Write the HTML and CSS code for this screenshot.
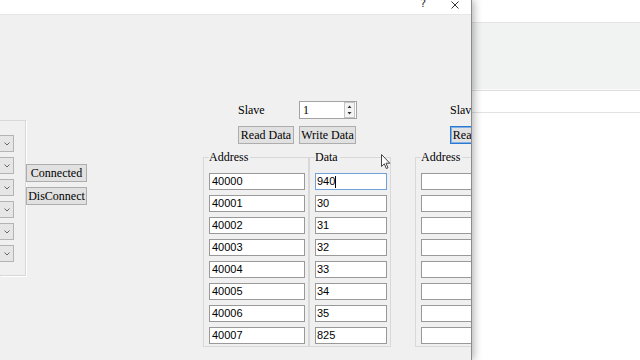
FILE: index.html
```html
<!DOCTYPE html>
<html>
<head>
<meta charset="utf-8">
<link rel="stylesheet" href="styles.css">
</head>
<body>
<div class="screen">
  <div class="dialog">
    <div class="titlebar">
      <span class="help">?</span>
      <svg class="close" width="8" height="8" viewBox="0 0 8 8"><path d="M0.5 0.5 L7.5 7.5 M7.5 0.5 L0.5 7.5" stroke="#333" stroke-width="1" fill="none"/></svg>
    </div>
    <div class="client">
      <div class="port-group">
        <div class="combo"><svg width="6" height="4" viewBox="0 0 6 4"><path d="M0.5 0.5 L3 3 L5.5 0.5" stroke="#666" fill="none"/></svg></div>
        <div class="combo"><svg width="6" height="4" viewBox="0 0 6 4"><path d="M0.5 0.5 L3 3 L5.5 0.5" stroke="#666" fill="none"/></svg></div>
        <div class="combo"><svg width="6" height="4" viewBox="0 0 6 4"><path d="M0.5 0.5 L3 3 L5.5 0.5" stroke="#666" fill="none"/></svg></div>
        <div class="combo"><svg width="6" height="4" viewBox="0 0 6 4"><path d="M0.5 0.5 L3 3 L5.5 0.5" stroke="#666" fill="none"/></svg></div>
        <div class="combo"><svg width="6" height="4" viewBox="0 0 6 4"><path d="M0.5 0.5 L3 3 L5.5 0.5" stroke="#666" fill="none"/></svg></div>
        <div class="combo"><svg width="6" height="4" viewBox="0 0 6 4"><path d="M0.5 0.5 L3 3 L5.5 0.5" stroke="#666" fill="none"/></svg></div>
      </div>
      <div class="conn">
        <button class="btn">Connected</button>
        <button class="btn">DisConnect</button>
      </div>
      <div class="devices">
        <div class="device">
          <div class="slave-row">
            <span class="lbl">Slave</span>
            <div class="spin">
              <span class="spin-val">1</span>
              <div class="spin-btns">
                <svg width="9" height="14" viewBox="0 0 9 14"><path d="M4.5 2.5 L6.5 5 L2.5 5 Z M2.5 9 L6.5 9 L4.5 11.5 Z" fill="#333"/></svg>
              </div>
            </div>
          </div>
          <div class="action-row">
            <button class="btn btn-read">Read Data</button>
            <button class="btn btn-write">Write Data</button>
          </div>
          <div class="tables">
            <fieldset class="grp grp-addr">
              <legend>Address</legend>
              <div class="cells">
                <div class="cell">40000</div>
                <div class="cell">40001</div>
                <div class="cell">40002</div>
                <div class="cell">40003</div>
                <div class="cell">40004</div>
                <div class="cell">40005</div>
                <div class="cell">40006</div>
                <div class="cell">40007</div>
              </div>
            </fieldset>
            <fieldset class="grp grp-data">
              <legend>Data</legend>
              <div class="cells">
                <div class="cell cell-focus">940<span class="caret"></span></div>
                <div class="cell">30</div>
                <div class="cell">31</div>
                <div class="cell">32</div>
                <div class="cell">33</div>
                <div class="cell">34</div>
                <div class="cell">35</div>
                <div class="cell">825</div>
              </div>
            </fieldset>
          </div>
        </div>
        <div class="device">
          <div class="slave-row">
            <span class="lbl">Slave</span>
            <div class="spin">
              <span class="spin-val">1</span>
              <div class="spin-btns">
                <svg width="9" height="14" viewBox="0 0 9 14"><path d="M4.5 2.5 L6.5 5 L2.5 5 Z M2.5 9 L6.5 9 L4.5 11.5 Z" fill="#333"/></svg>
              </div>
            </div>
          </div>
          <div class="action-row">
            <button class="btn btn-read btn-default">Read Data</button>
            <button class="btn btn-write">Write Data</button>
          </div>
          <div class="tables">
            <fieldset class="grp grp-addr">
              <legend>Address</legend>
              <div class="cells">
                <div class="cell"></div>
                <div class="cell"></div>
                <div class="cell"></div>
                <div class="cell"></div>
                <div class="cell"></div>
                <div class="cell"></div>
                <div class="cell"></div>
                <div class="cell"></div>
              </div>
            </fieldset>
            <fieldset class="grp grp-data">
              <legend>Data</legend>
              <div class="cells">
                <div class="cell"></div>
                <div class="cell"></div>
                <div class="cell"></div>
                <div class="cell"></div>
                <div class="cell"></div>
                <div class="cell"></div>
                <div class="cell"></div>
                <div class="cell"></div>
              </div>
            </fieldset>
          </div>
        </div>
      </div>
    </div>
  </div>
  <div class="bgwin">
    <div class="bw-top"></div>
    <div class="bw-ribbon"></div>
    <div class="bw-sep"></div>
    <div class="bw-bar"></div>
    <div class="bw-body"></div>
  </div>
  <svg class="pointer" width="11" height="16" viewBox="0 0 11 16"><path d="M0.5 0.5 L0.5 12.5 L3.3 9.8 L5.3 14.5 L7 13.8 L5 9.2 L8.8 9.2 Z" fill="#fff" stroke="#444" stroke-width="1" stroke-linejoin="round"/></svg>
</div>
</body>
</html>
```

FILE: styles.css
```css
* { box-sizing: border-box; }
html, body { margin: 0; padding: 0; }
body {
  width: 640px;
  height: 360px;
  overflow: hidden;
  background: #fff;
  font-family: "Liberation Serif", "Times New Roman", serif;
  font-size: 12px;
  color: #000;
}
.screen {
  position: relative;
  display: flex;
  width: 640px;
  height: 360px;
  overflow: hidden;
}
.dialog {
  position: relative;
  z-index: 1;
  flex: none;
  width: 472px;
  display: flex;
  flex-direction: column;
  background: #f0f0f0;
  border-right: 1px solid #8c8c8c;
  box-shadow: 2px 0 8px rgba(0, 0, 0, 0.3);
  overflow: hidden;
}
.titlebar {
  flex: none;
  height: 15px;
  background: #fff;
  border-bottom: 1px solid #e6e6e6;
  display: flex;
  justify-content: flex-end;
  align-items: flex-start;
  padding-right: 12px;
}
.help {
  font-family: "DejaVu Sans", sans-serif;
  font-size: 11px;
  line-height: 11px;
  height: 10px;
  margin-top: -2px;
  color: #333;
  margin-right: 25px;
}
.close { margin-top: 1px; }
.client {
  flex: 1;
  display: flex;
  align-items: flex-start;
}
.port-group {
  flex: none;
  width: 26px;
  height: 156px;
  margin-top: 105px;
  border: 1px solid #d8d8d8;
  border-left: none;
  box-shadow: 1px 1px 0 #fff;
  padding-top: 14px;
  display: flex;
  flex-direction: column;
  gap: 5px;
}
.combo {
  width: 14px;
  height: 17px;
  background: #e6e6e6;
  border: 1px solid #b4b4b4;
  border-left: none;
  display: flex;
  align-items: center;
  justify-content: center;
}
.conn {
  flex: none;
  width: 61px;
  margin-top: 149px;
  display: flex;
  flex-direction: column;
  gap: 5px;
}
.btn {
  height: 18px;
  margin: 0;
  padding: 0;
  background: #e1e1e1;
  border: 1px solid #adadad;
  font-family: "Liberation Serif", "Times New Roman", serif;
  font-size: 12px;
  line-height: 16px;
  color: #000;
  white-space: nowrap;
  overflow: hidden;
}
.devices {
  flex: none;
  display: flex;
  gap: 24px;
  margin-left: 116px;
  margin-top: 86px;
}
.device {
  flex: none;
  width: 188px;
  display: flex;
  flex-direction: column;
}
.slave-row {
  display: flex;
  align-items: center;
  height: 18px;
  padding-left: 35px;
}
.lbl { width: 61px; }
.spin {
  width: 58px;
  height: 18px;
  background: #fff;
  border: 1px solid #a3a3a3;
  display: flex;
  align-items: center;
}
.spin-val {
  flex: 1;
  padding-left: 3px;
  line-height: 16px;
}
.spin-btns {
  width: 11px;
  height: 16px;
  margin-right: 1px;
  border: 1px solid #c4c4c4;
  background: #f4f4f4;
  display: flex;
  align-items: center;
  justify-content: center;
}
.action-row {
  display: flex;
  gap: 5px;
  padding-left: 35px;
  margin-top: 7px;
}
.btn-read { width: 56px; }
.btn-write { width: 57px; }
.btn-default { border-color: #2a78cf; box-shadow: inset 0 0 0 1px #7fb0e6; }
.tables {
  display: flex;
  margin-top: 6px;
}
.grp {
  margin: 0;
  min-width: 0;
  border: 1px solid #d8d8d8;
  padding: 0 3px 2px 5px;
}
.grp legend {
  padding: 0 2px 0 0;
  font-size: 12px;
  line-height: 14px;
}
.grp-addr { width: 106px; }
.grp-data { width: 82px; }
.cells {
  display: flex;
  flex-direction: column;
  gap: 5px;
  padding-top: 9px;
}
.cell {
  height: 17px;
  background: #fff;
  border: 1px solid #999;
  padding: 0 2px;
  font-family: "Liberation Sans", Arial, sans-serif;
  font-size: 11px;
  line-height: 15px;
  display: flex;
  align-items: center;
}
.grp-addr .cell { width: 96px; }
.grp-data .cell { width: 72px; padding-left: 1px; }
.cell-focus { border-color: #6ea3d8; }
.caret {
  width: 1px;
  height: 12px;
  background: #000;
}
.bgwin {
  flex: 1;
  display: flex;
  flex-direction: column;
  background: #fff;
}
.bw-top {
  height: 23px;
  flex: none;
  background: #fff;
  border-bottom: 1px solid #e4e4e4;
}
.bw-ribbon {
  height: 66px;
  flex: none;
  background: #f1f2f2;
}
.bw-sep {
  height: 2px;
  flex: none;
  background: #fbfbfb;
  border-bottom: 1px solid #dedede;
}
.bw-bar {
  height: 22px;
  flex: none;
  background: #fff;
  border-bottom: 1px solid #e2e2e2;
}
.bw-body { flex: 1; background: #fff; }
.pointer {
  position: absolute;
  left: 381px;
  top: 154px;
  z-index: 2;
}
```
